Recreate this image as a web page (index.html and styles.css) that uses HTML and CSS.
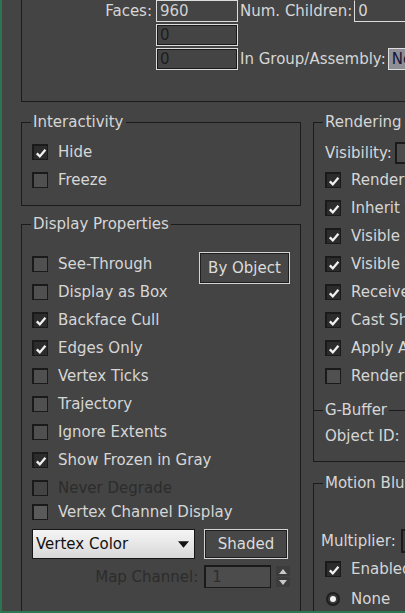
FILE: index.html
```html
<!DOCTYPE html>
<html lang="en">
<head>
  <meta charset="UTF-8">
  <title>Object Properties</title>
  <link rel="stylesheet" href="styles.css">
</head>
<body>
  <div class="frame">
    <div class="stats">
      <div class="stats-row">
        <span class="stats-label">Faces:</span>
        <span class="field field-lit">960</span>
        <span class="stats-label2">Num. Children:</span>
        <span class="field field-open">0</span>
      </div>
      <div class="stats-row">
        <span class="stats-label"></span>
        <span class="field field-off">0</span>
      </div>
      <div class="stats-row">
        <span class="stats-label"></span>
        <span class="field field-off">0</span>
        <span class="stats-label2">In Group/Assembly:</span>
        <span class="field field-sel">No</span>
      </div>
    </div>

    <div class="columns">
      <div class="col-left">
        <fieldset class="group group-interact">
          <legend>Interactivity</legend>
          <div class="opt"><span class="box on"><svg viewBox="0 0 12 12" width="12" height="12"><path d="M1.8 6.4 L4.8 9.4 L10.4 2.8" fill="none" stroke="#f2f2f2" stroke-width="2.3"/></svg></span>Hide</div>
          <div class="opt"><span class="box"></span>Freeze</div>
        </fieldset>

        <fieldset class="group group-display">
          <legend>Display Properties</legend>
          <div class="dp-body">
            <div class="dp-list">
              <div class="opt"><span class="box"></span>See-Through</div>
              <div class="opt"><span class="box"></span>Display as Box</div>
              <div class="opt"><span class="box on"><svg viewBox="0 0 12 12" width="12" height="12"><path d="M1.8 6.4 L4.8 9.4 L10.4 2.8" fill="none" stroke="#f2f2f2" stroke-width="2.3"/></svg></span>Backface Cull</div>
              <div class="opt"><span class="box on"><svg viewBox="0 0 12 12" width="12" height="12"><path d="M1.8 6.4 L4.8 9.4 L10.4 2.8" fill="none" stroke="#f2f2f2" stroke-width="2.3"/></svg></span>Edges Only</div>
              <div class="opt"><span class="box"></span>Vertex Ticks</div>
              <div class="opt"><span class="box"></span>Trajectory</div>
              <div class="opt"><span class="box"></span>Ignore Extents</div>
              <div class="opt"><span class="box on"><svg viewBox="0 0 12 12" width="12" height="12"><path d="M1.8 6.4 L4.8 9.4 L10.4 2.8" fill="none" stroke="#f2f2f2" stroke-width="2.3"/></svg></span>Show Frozen in Gray</div>
              <div class="opt opt-disabled"><span class="box box-dim"></span>Never Degrade</div>
              <div class="opt opt-tight"><span class="box box-lite"></span>Vertex Channel Display</div>
            </div>
            <button class="btn btn-object">By Object</button>
          </div>
          <div class="dp-controls">
            <div class="select">
              <span>Vertex Color</span>
              <svg viewBox="0 0 10 6" width="11" height="7"><path d="M0 0 H10 L5 6 Z" fill="#111"/></svg>
            </div>
            <button class="btn btn-shaded">Shaded</button>
          </div>
          <div class="map-row">
            <span class="map-label">Map Channel:</span>
            <span class="map-input">1</span>
            <span class="spinner">
              <span class="spin"><svg viewBox="0 0 8 5" width="8" height="5"><path d="M0 5 L4 0 L8 5 Z" fill="#c8c8c8"/></svg></span>
              <span class="spin"><svg viewBox="0 0 8 5" width="8" height="5"><path d="M0 0 L4 5 L8 0 Z" fill="#c8c8c8"/></svg></span>
            </span>
          </div>
        </fieldset>
      </div>

      <div class="col-right">
        <fieldset class="group group-render">
          <legend>Rendering Control</legend>
          <div class="vis-row">Visibility:<span class="vis-input"></span></div>
          <div class="opt"><span class="box on"><svg viewBox="0 0 12 12" width="12" height="12"><path d="M1.8 6.4 L4.8 9.4 L10.4 2.8" fill="none" stroke="#f2f2f2" stroke-width="2.3"/></svg></span>Renderable</div>
          <div class="opt"><span class="box on"><svg viewBox="0 0 12 12" width="12" height="12"><path d="M1.8 6.4 L4.8 9.4 L10.4 2.8" fill="none" stroke="#f2f2f2" stroke-width="2.3"/></svg></span>Inherit Visibility</div>
          <div class="opt"><span class="box on"><svg viewBox="0 0 12 12" width="12" height="12"><path d="M1.8 6.4 L4.8 9.4 L10.4 2.8" fill="none" stroke="#f2f2f2" stroke-width="2.3"/></svg></span>Visible to Camera</div>
          <div class="opt"><span class="box on"><svg viewBox="0 0 12 12" width="12" height="12"><path d="M1.8 6.4 L4.8 9.4 L10.4 2.8" fill="none" stroke="#f2f2f2" stroke-width="2.3"/></svg></span>Visible to Reflection/Refraction</div>
          <div class="opt"><span class="box on"><svg viewBox="0 0 12 12" width="12" height="12"><path d="M1.8 6.4 L4.8 9.4 L10.4 2.8" fill="none" stroke="#f2f2f2" stroke-width="2.3"/></svg></span>Receive Shadows</div>
          <div class="opt"><span class="box on"><svg viewBox="0 0 12 12" width="12" height="12"><path d="M1.8 6.4 L4.8 9.4 L10.4 2.8" fill="none" stroke="#f2f2f2" stroke-width="2.3"/></svg></span>Cast Shadows</div>
          <div class="opt"><span class="box on"><svg viewBox="0 0 12 12" width="12" height="12"><path d="M1.8 6.4 L4.8 9.4 L10.4 2.8" fill="none" stroke="#f2f2f2" stroke-width="2.3"/></svg></span>Apply Atmospherics</div>
          <div class="opt"><span class="box"></span>Render Occluded Objects</div>
          <fieldset class="subgroup">
            <legend>G-Buffer</legend>
            <div class="plain-row">Object ID:</div>
          </fieldset>
        </fieldset>

        <fieldset class="group group-blur">
          <legend>Motion Blur</legend>
          <div class="plain-row mult-row">Multiplier:<span class="mult-input"></span></div>
          <div class="opt"><span class="box on"><svg viewBox="0 0 12 12" width="12" height="12"><path d="M1.8 6.4 L4.8 9.4 L10.4 2.8" fill="none" stroke="#f2f2f2" stroke-width="2.3"/></svg></span>Enabled</div>
          <div class="opt opt-radio"><span class="radio"><span class="dot"></span></span>None</div>
        </fieldset>
      </div>
    </div>
  </div>
</body>
</html>
```

FILE: styles.css
```css
* {
  box-sizing: border-box;
}
body {
  margin: 0;
  background-color: #444444;
  font-family: "DejaVu Sans", sans-serif;
  font-size: 15px;
  color: #d6d6d6;
  overflow: hidden;
}
.frame {
  width: 405px;
  height: 613px;
  overflow: hidden;
  border-left: 2px solid #2d7550;
  border-bottom: 2px solid #2d7550;
}

/* top statistics */
.stats {
  margin-left: 19px;
  width: 640px;
  height: 102px;
  border-left: 1px solid #1b1b1b;
  border-bottom: 1px solid #1b1b1b;
  display: flex;
  flex-direction: column;
  gap: 2px;
}
.stats-row {
  display: flex;
  align-items: center;
  height: 22px;
}
.stats-label {
  width: 134px;
  padding-right: 4px;
  text-align: right;
}
.stats-label2 {
  padding: 0 2px;
}
.field {
  height: 22px;
  width: 82px;
  line-height: 20px;
  padding-left: 3px;
  border: 1px solid #dcdcdc;
}
.field-lit {
  color: #d0d0d0;
}
.field-off {
  color: #1e1e1e;
  box-shadow: inset 0 0 0 1px #1a1a1a;
}
.field-open {
  width: 80px;
  border-top-color: #444444;
  border-right: none;
}
.field-sel {
  width: 40px;
  color: #151535;
  background-color: #8e8e96;
}

/* columns */
.columns {
  display: flex;
  margin-left: 19px;
  margin-top: 11px;
}
.col-left {
  width: 280px;
  flex: none;
}
.col-right {
  width: 320px;
  flex: none;
  margin-left: 12px;
}
.group {
  margin: 0;
  min-width: 0;
  border: 1px solid #1b1b1b;
}
legend {
  margin-left: -1px;
  padding: 0 2px;
  line-height: 18px;
}
.group-interact {
  padding: 7px 10px 11px 10px;
}
.group-display {
  margin-top: 9px;
  height: 440px;
  padding: 17px 10px 0 10px;
}
.group-render {
  padding: 9px 0 11px 11px;
}
.group-render legend,
.group-blur legend,
.subgroup legend {
  margin-left: -2px;
}
.group-blur {
  margin-top: 12px;
  height: 200px;
  padding: 35px 0 0 11px;
}
.subgroup {
  margin: 11px 0 0 -11px;
  padding: 3px 0 0 11px;
  border: none;
  border-top: 1px solid #1b1b1b;
  min-width: 0;
}

/* options */
.opt {
  display: flex;
  align-items: center;
  gap: 10px;
  height: 28px;
  white-space: nowrap;
}
.opt-tight {
  height: 20px;
}
.opt-radio {
  height: 31px;
}
.opt-disabled {
  color: #2c2c2c;
}
.box {
  flex: none;
  width: 16px;
  height: 16px;
  display: flex;
  align-items: center;
  justify-content: center;
  border-style: solid;
  border-color: #1a1a1a;
  border-width: 2px 1px 1px 2px;
  background-color: #505050;
}
.box.on {
  background-color: #2c2c2c;
}
.box-dim {
  background-color: #444444;
}
.box-lite {
  background-color: #5a5a5a;
}
.radio {
  flex: none;
  width: 14px;
  height: 14px;
  margin-left: 1px;
  margin-right: 1px;
  border-radius: 50%;
  border: 2px solid #1e1e1e;
  background-color: #3a3a3a;
  display: flex;
  align-items: center;
  justify-content: center;
}
.dot {
  width: 6px;
  height: 6px;
  border-radius: 50%;
  background-color: #f2f2f2;
}

/* display properties */
.dp-body {
  display: flex;
  justify-content: space-between;
}
.dp-list {
  flex: 1;
  min-width: 0;
}
.btn {
  font: inherit;
  color: #dcdcdc;
  background-color: #474747;
  border: 1px solid #d4d4d4;
  box-shadow: inset 0 0 0 1px #1e1e1e;
  padding: 0;
  display: flex;
  align-items: center;
  justify-content: center;
  white-space: nowrap;
  flex: none;
}
.btn-object {
  margin-top: 2px;
  width: 91px;
  height: 32px;
}
.dp-controls {
  display: flex;
  gap: 9px;
  margin-top: 7px;
}
.select {
  width: 163px;
  height: 30px;
  display: flex;
  align-items: center;
  justify-content: space-between;
  padding: 0 5px 0 3px;
  color: #111;
  border: 1px solid #161616;
  background: linear-gradient(#f5f5f5, #d8d8d8);
}
.btn-shaded {
  width: 84px;
  height: 30px;
}
.map-row {
  display: flex;
  align-items: center;
  margin-top: 6px;
  height: 23px;
}
.map-label {
  width: 167px;
  text-align: right;
  color: #2c2c2c;
}
.map-input {
  margin-left: 6px;
  width: 67px;
  height: 23px;
  line-height: 20px;
  padding-left: 6px;
  color: #2e2e2e;
  background-color: #4c4c4c;
  border-style: solid;
  border-color: #1a1a1a;
  border-width: 2px 1px 1px 2px;
}
.spinner {
  margin-left: 5px;
  display: flex;
  flex-direction: column;
  gap: 1px;
}
.spin {
  width: 14px;
  height: 10px;
  display: flex;
  align-items: center;
  justify-content: center;
  background-color: #3c3c3c;
}

/* right column */
.vis-row {
  display: flex;
  align-items: center;
  height: 26px;
  white-space: nowrap;
}
.vis-input {
  margin-left: 3px;
  width: 40px;
  height: 22px;
  border: 2px solid #1a1a1a;
  background-color: #4c4c4c;
}
.plain-row {
  display: flex;
  align-items: center;
  height: 28px;
  white-space: nowrap;
}
.mult-row {
  margin-left: -4px;
}
.mult-input {
  margin-left: 5px;
  width: 40px;
  height: 24px;
  border: 2px solid #1a1a1a;
  background-color: #3a3a3a;
}
```
